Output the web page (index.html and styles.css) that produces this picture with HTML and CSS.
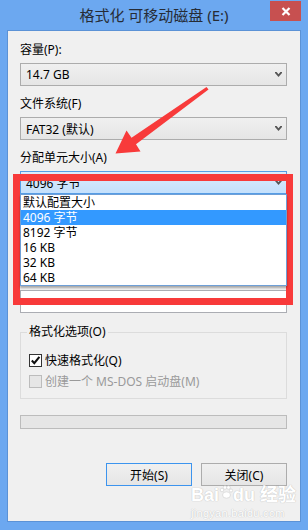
FILE: index.html
```html
<!DOCTYPE html>
<html>

<head>
    <meta charset="UTF-8">
    <meta name="viewport" content="width=device-width, initial-scale=1">
    <title>格式化 可移动磁盘 (E:)</title>
    <link rel="stylesheet" href="styles.css">
</head>

<body>
    <!-- dialog window -->
    <div class="window">
        <!-- title bar -->
        <div class="titlebar">
            <span></span>
            <h1 class="title">格式化 可移动磁盘 (E:)</h1>
            <button class="close">
                <svg width="10" height="9" viewBox="0 0 10 9">
                    <path d="M1.5 1 L8.5 8 M8.5 1 L1.5 8" stroke="#fff" stroke-width="2.2" fill="none" />
                </svg>
            </button>
        </div>

        <!-- client area -->
        <div class="client">
            <div class="label">容量(P):</div>
            <div class="combo">
                <span>14.7 GB</span>
                <svg class="chevron" width="7" height="5" viewBox="0 0 7 5">
                    <polygon points="0,0 1.6,0 3.5,2.2 5.4,0 7,0 7,1 3.5,5 0,1" />
                </svg>
            </div>

            <div class="label gap">文件系统(F)</div>
            <div class="combo">
                <span>FAT32 (默认)</span>
                <svg class="chevron" width="7" height="5" viewBox="0 0 7 5">
                    <polygon points="0,0 1.6,0 3.5,2.2 5.4,0 7,0 7,1 3.5,5 0,1" />
                </svg>
            </div>

            <div class="label gap">分配单元大小(A)</div>
            <div class="dropdown">
                <div class="combo open">
                    <span>4096 字节</span>
                    <svg class="chevron" width="7" height="5" viewBox="0 0 7 5">
                        <polygon points="0,0 1.6,0 3.5,2.2 5.4,0 7,0 7,1 3.5,5 0,1" />
                    </svg>
                </div>
                <!-- open list -->
                <ul class="list">
                    <li>默认配置大小</li>
                    <li class="selected">4096 字节</li>
                    <li>8192 字节</li>
                    <li>16 KB</li>
                    <li>32 KB</li>
                    <li>64 KB</li>
                </ul>
            </div>

            <!-- volume label field, mostly under the open list -->
            <div class="textbox"></div>

            <!-- format options -->
            <fieldset class="group">
                <legend>格式化选项(O)</legend>
                <div class="option">
                    <span class="check">
                        <svg width="11" height="11" viewBox="0 0 11 11">
                            <path d="M1.8 5.6 L4.3 8.2 L9.4 1.8" stroke="#111" stroke-width="2.1" fill="none" />
                        </svg>
                    </span>
                    快速格式化(Q)
                </div>
                <div class="option disabled">
                    <span class="check"></span>
                    创建一个 MS-DOS 启动盘(M)
                </div>
            </fieldset>

            <div class="progress"></div>

            <div class="actions">
                <button class="btn default">开始(S)</button>
                <button class="btn">关闭(C)</button>
            </div>
        </div>

        <!-- red markup drawn over the screenshot -->
        <svg class="markup" width="308" height="530" viewBox="0 0 308 530">
            <rect x="16.5" y="177.5" width="273" height="124" fill="none" stroke="#f83a3a" stroke-width="7" />
            <polygon points="206.5,87 208.5,89.5 136,144.3 140.5,151.5 115.5,153.5 126.5,130.5 131.5,137.7" fill="#f83a3a" />
        </svg>

        <!-- watermark -->
        <div class="watermark">
            <div class="brand">Bai<svg width="14" height="14" viewBox="0 0 14 14">
                    <circle cx="3" cy="5" r="1.8" />
                    <circle cx="6" cy="2.5" r="1.8" />
                    <circle cx="9.5" cy="2.5" r="1.8" />
                    <circle cx="12" cy="5.5" r="1.6" />
                    <ellipse cx="7.5" cy="10" rx="4" ry="3.2" />
                </svg>du 经验</div>
            <div class="site">jingyan.baidu.com</div>
        </div>
    </div>
</body>

</html>
```

FILE: styles.css
```css
* {
    box-sizing: border-box;
}

body {
    margin: 0px;
    font-family: "Noto Sans", "Noto Sans CJK SC", sans-serif;
    font-size: 12px;
    color: #000;
}

.window {
    position: relative;
    width: 308px;
    height: 530px;
    display: flex;
    flex-direction: column;
    padding: 0 7px 8px 7px;
    background-color: #6ca8f0;
}

/* title bar */
.titlebar {
    height: 30px;
    display: grid;
    grid-template-columns: 1fr auto 1fr;
}

.title {
    margin: 0;
    font-size: 15px;
    font-weight: normal;
    line-height: 30px;
    color: #262c36;
    white-space: nowrap;
}

.close {
    justify-self: end;
    align-self: start;
    margin-top: 1px;
    width: 31px;
    height: 20px;
    padding: 0;
    border: none;
    background-color: #c75050;
    display: flex;
    align-items: center;
    justify-content: center;
}

/* client area */
.client {
    flex: 1;
    display: flex;
    flex-direction: column;
    padding: 11px 13px 0 12px;
    background-color: #f0f0f0;
    border: 1px solid #5b92d6;
}

.label {
    line-height: 16px;
    white-space: nowrap;
}

.label.gap {
    margin-top: 10px;
}

.combo {
    margin-top: 5px;
    height: 23px;
    display: flex;
    align-items: center;
    justify-content: space-between;
    padding: 0 4px 0 5px;
    border: 1px solid #acacac;
    background: linear-gradient(#f0f0f0, #e5e5e5);
}

.chevron {
    fill: #555;
}

.combo.open {
    border-color: #569de5;
    background: linear-gradient(#dcecfc, #c4e0fc);
}

.dropdown {
    position: relative;
}

.list {
    position: absolute;
    top: 100%;
    left: 0;
    right: 0;
    z-index: 2;
    margin: 0;
    padding: 0;
    list-style: none;
    background-color: #fff;
    border: 1px solid #6e9fd7;
    box-shadow: 0 2px 2px rgba(0, 0, 0, 0.3);
}

.list li {
    height: 15px;
    line-height: 15px;
    padding-left: 2px;
    white-space: nowrap;
}

.list .selected {
    background-color: #3399ff;
    color: #fff;
}

.textbox {
    margin-top: 96px;
    height: 23px;
    background-color: #fff;
    border: 1px solid #abadb3;
}

/* format options */
.group {
    margin: 11px 0 0 0;
    padding: 0 6px 9px 6px;
    min-width: 0;
    border: 1px solid #dcdcdc;
}

.group legend {
    padding: 0 2px;
    line-height: 16px;
}

.option {
    display: flex;
    align-items: center;
    gap: 3px;
    height: 16px;
    margin-top: 5px;
    padding-left: 2px;
    white-space: nowrap;
}

.group legend + .option {
    margin-top: 12px;
}

.check {
    width: 13px;
    height: 13px;
    display: flex;
    align-items: center;
    justify-content: center;
    border: 1px solid #333;
    background-color: #fff;
}

.option.disabled {
    color: #9a9a9a;
}

.option.disabled .check {
    border-color: #bcbcbc;
    background-color: #e6e6e6;
}

.progress {
    margin-top: 16px;
    height: 14px;
    border: 1px solid #bcbcbc;
    background-color: #e6e6e6;
}

.actions {
    margin-top: 34px;
    display: flex;
    justify-content: flex-end;
    gap: 9px;
}

.btn {
    width: 86px;
    height: 23px;
    padding: 0;
    font-family: inherit;
    font-size: 12px;
    color: #000;
    border: 1px solid #acacac;
    background: linear-gradient(#f0f0f0, #e5e5e5);
}

.btn.default {
    border-color: #3c94ee;
}

/* overlays */
.markup {
    position: absolute;
    top: 0;
    left: 0;
    pointer-events: none;
}

.watermark {
    position: absolute;
    left: 191px;
    top: 485px;
    color: #fff;
    text-shadow: 0 0 1px #c4c4c4, 0 0 1px #c4c4c4;
    font-family: "Liberation Sans", "Noto Sans CJK SC", sans-serif;
}

.brand {
    display: flex;
    align-items: center;
    font-size: 18px;
    font-weight: bold;
    line-height: 20px;
}

.brand svg {
    fill: #fff;
    stroke: #cccccc;
    stroke-width: 0.6;
    margin-top: -6px;
}

.site {
    font-size: 11px;
    line-height: 13px;
    margin-top: 2px;
    letter-spacing: 0.3px;
}
```
